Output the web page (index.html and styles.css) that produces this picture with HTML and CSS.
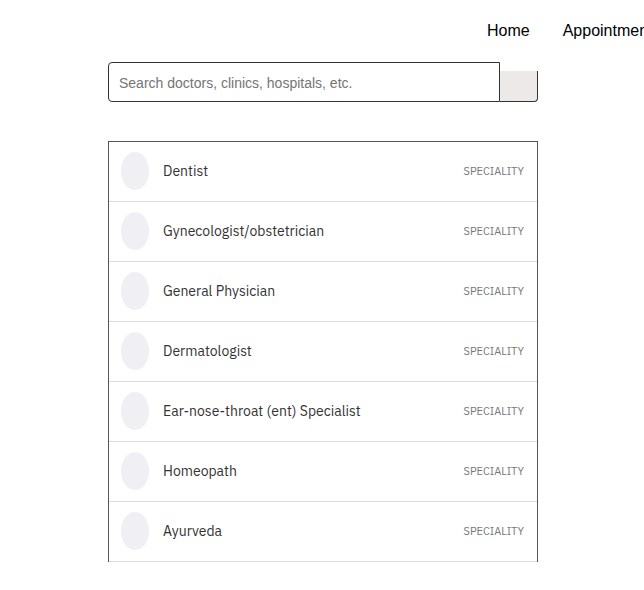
FILE: index.html
```html
<!DOCTYPE html>
<html>
<head>
<meta charset="utf-8">
<link rel="stylesheet" href="styles.css">
</head>
<body>
<nav class="nav">
  <a class="nav-link" href="#">Home</a>
  <a class="nav-link" href="#">Appointments</a>
</nav>
<main class="main">
  <form class="search">
    <input class="search-input" type="text" placeholder="Search doctors, clinics, hospitals, etc.">
    <button class="search-btn" type="button"></button>
  </form>
  <ul class="list">
    <li class="item"><span class="avatar"></span><span class="name">Dentist</span><span class="tag">SPECIALITY</span></li>
    <li class="item"><span class="avatar"></span><span class="name">Gynecologist/obstetrician</span><span class="tag">SPECIALITY</span></li>
    <li class="item"><span class="avatar"></span><span class="name">General Physician</span><span class="tag">SPECIALITY</span></li>
    <li class="item"><span class="avatar"></span><span class="name">Dermatologist</span><span class="tag">SPECIALITY</span></li>
    <li class="item"><span class="avatar"></span><span class="name">Ear-nose-throat (ent) Specialist</span><span class="tag">SPECIALITY</span></li>
    <li class="item"><span class="avatar"></span><span class="name">Homeopath</span><span class="tag">SPECIALITY</span></li>
    <li class="item"><span class="avatar"></span><span class="name">Ayurveda</span><span class="tag">SPECIALITY</span></li>
  </ul>
</main>
</body>
</html>
```
FILE: styles.css
```css
html { overflow: hidden; }
body {
  margin: 0;
  font-family: "Liberation Sans", Arial, sans-serif;
  background: #fff;
}
.nav {
  display: flex;
  gap: 33px;
  padding: 21px 0 0 487px;
  height: 62px;
  box-sizing: border-box;
  white-space: nowrap;
}
.nav-link {
  font-size: 16px;
  line-height: 20px;
  color: #000;
  text-decoration: none;
}
.main {
  margin-left: 108px;
  width: 430px;
}
.search {
  display: flex;
  align-items: flex-end;
  height: 40px;
  margin: 0 0 39px 0;
}
.search-input {
  width: 392px;
  height: 40px;
  box-sizing: border-box;
  border: 1px solid #333;
  border-radius: 4px 0 0 4px;
  padding: 2px 10px 0 10px;
  font-family: "Liberation Sans", Arial, sans-serif;
  font-size: 14px;
  color: #333;
  outline: none;
  margin: 0;
}
.search-input::placeholder { color: #757575; }
.search-btn {
  width: 38px;
  height: 31px;
  box-sizing: border-box;
  border: 1px solid #333;
  border-left: none;
  border-top: none;
  border-radius: 0 0 4px 0;
  background: #ede9e8;
  margin: 0;
  padding: 0;
}
.list {
  list-style: none;
  margin: 0;
  padding: 0;
  border: 1px solid #555;
  border-bottom: none;
  box-sizing: border-box;
  width: 430px;
}
.item {
  display: flex;
  align-items: center;
  height: 60px;
  box-sizing: border-box;
  border-bottom: 1px solid #ddd;
  padding: 0 13px 1px 12px;
  font-family: "IBM Plex Sans", Inter, "Noto Sans", sans-serif;
}
.avatar {
  width: 28px;
  height: 38px;
  border-radius: 50%;
  background: #efeff4;
  flex: none;
}
.name {
  margin-left: 14px;
  font-size: 14px;
  color: #333;
  flex: 1;
}
.tag {
  font-size: 11px;
  color: #777;
}
```
